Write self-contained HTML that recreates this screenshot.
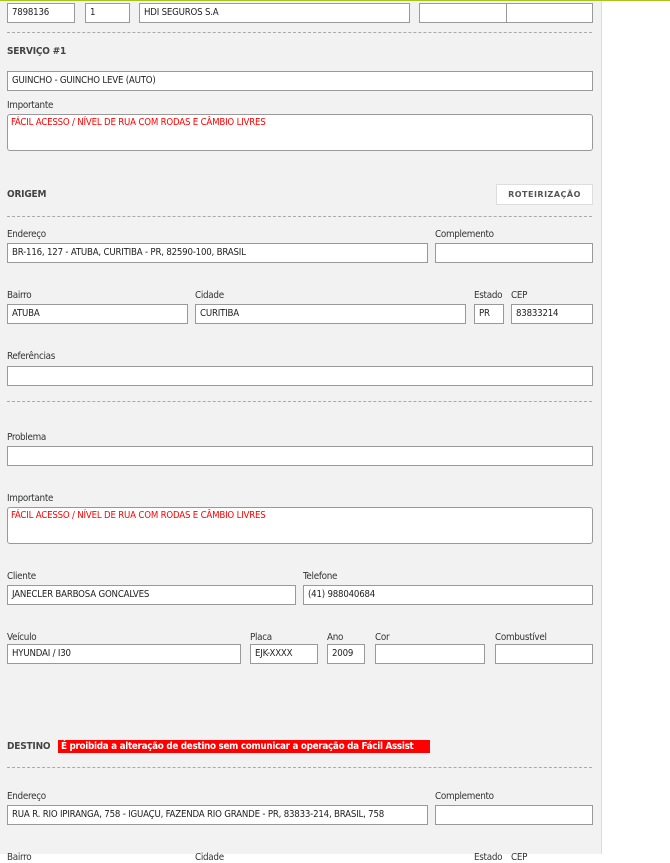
<!DOCTYPE html>
<html><head><meta charset="utf-8"><style>
*{margin:0;padding:0;box-sizing:border-box}
body{width:670px;height:854px;overflow:hidden;background:#fff;font-family:"DejaVu Sans Condensed","Liberation Sans",sans-serif;font-size:9px;color:#333;position:relative}
#panel{position:absolute;left:0;top:0;width:602px;height:854px;background:#f2f2f2;border-right:1px solid #dcdcdc}
#top{position:absolute;left:0;top:0;width:670px;height:1px;background:#a9c41c}
.i{position:absolute;height:20px;background:#fff;border:1px solid #999;padding:0 4px;line-height:18px;font-size:9.6px;color:#222;white-space:nowrap;overflow:hidden;letter-spacing:-0.2px}
.t{position:absolute;background:#fff;border:1px solid #999;border-radius:3px;padding:2px 3px;font-size:9.6px;color:#f00;letter-spacing:-0.2px}
.l{position:absolute;font-size:9.8px;color:#333;letter-spacing:-0.3px;margin-top:2px}
.h{position:absolute;font-size:10px;font-weight:bold;color:#444;font-family:"DejaVu Sans Condensed","Liberation Sans",sans-serif;letter-spacing:-0.2px;margin-top:0px}
.d{position:absolute;left:7px;width:585px;border-top:1px dashed #aaa}
</style></head><body>
<div id="panel"></div><div id="top"></div>
<div class="i" style="left:7px;top:3px;width:68px">7898136</div>
<div class="i" style="left:85px;top:3px;width:45px">1</div>
<div class="i" style="left:139px;top:3px;width:271px">HDI SEGUROS S.A</div>
<div class="i" style="left:419px;top:3px;width:88px"></div>
<div class="i" style="left:506px;top:3px;width:87px"></div>
<div class="d" style="top:32px"></div>
<div class="h" style="left:7px;top:46px">SERVIÇO #1</div>
<div class="i" style="left:7px;top:71px;width:586px">GUINCHO - GUINCHO LEVE (AUTO)</div>
<div class="l" style="left:7px;top:98px">Importante</div>
<div class="t" style="left:7px;top:114px;width:586px;height:37px">FÁCIL ACESSO / NÍVEL DE RUA COM RODAS E CÂMBIO LIVRES</div>
<div class="h" style="left:7px;top:189px">ORIGEM</div>
<div style="position:absolute;left:496px;top:184px;width:97px;height:21px;background:#fff;border:1px solid #ddd;font-size:8px;font-weight:bold;color:#555;text-align:center;line-height:19px;letter-spacing:0.5px;font-family:'DejaVu Sans',sans-serif">ROTEIRIZAÇÃO</div>
<div class="d" style="top:216px"></div>
<div class="l" style="left:7px;top:227px">Endereço</div>
<div class="l" style="left:435px;top:227px">Complemento</div>
<div class="i" style="left:7px;top:243px;width:421px">BR-116, 127 - ATUBA, CURITIBA - PR, 82590-100, BRASIL</div>
<div class="i" style="left:435px;top:243px;width:158px"></div>
<div class="l" style="left:7px;top:288px">Bairro</div>
<div class="l" style="left:195px;top:288px">Cidade</div>
<div class="l" style="left:474px;top:288px">Estado</div>
<div class="l" style="left:511px;top:288px">CEP</div>
<div class="i" style="left:7px;top:304px;width:181px">ATUBA</div>
<div class="i" style="left:195px;top:304px;width:271px">CURITIBA</div>
<div class="i" style="left:474px;top:304px;width:30px">PR</div>
<div class="i" style="left:511px;top:304px;width:82px">83833214</div>
<div class="l" style="left:7px;top:349px">Referências</div>
<div class="i" style="left:7px;top:366px;width:586px"></div>
<div class="d" style="top:401px"></div>
<div class="l" style="left:7px;top:430px">Problema</div>
<div class="i" style="left:7px;top:446px;width:586px"></div>
<div class="l" style="left:7px;top:491px">Importante</div>
<div class="t" style="left:7px;top:507px;width:586px;height:37px">FÁCIL ACESSO / NÍVEL DE RUA COM RODAS E CÂMBIO LIVRES</div>
<div class="l" style="left:7px;top:569px">Cliente</div>
<div class="l" style="left:303px;top:569px">Telefone</div>
<div class="i" style="left:7px;top:585px;width:289px">JANECLER BARBOSA GONCALVES</div>
<div class="i" style="left:303px;top:585px;width:290px">(41) 988040684</div>
<div class="l" style="left:7px;top:630px">Veículo</div>
<div class="l" style="left:250px;top:630px">Placa</div>
<div class="l" style="left:327px;top:630px">Ano</div>
<div class="l" style="left:375px;top:630px">Cor</div>
<div class="l" style="left:495px;top:630px">Combustível</div>
<div class="i" style="left:7px;top:644px;width:234px">HYUNDAI / I30</div>
<div class="i" style="left:250px;top:644px;width:68px">EJK-XXXX</div>
<div class="i" style="left:327px;top:644px;width:38px">2009</div>
<div class="i" style="left:375px;top:644px;width:110px"></div>
<div class="i" style="left:495px;top:644px;width:98px"></div>
<div class="h" style="left:7px;top:741px">DESTINO</div>
<div style="position:absolute;left:58px;top:740px;width:372px;height:13px;background:#f00;color:#fff;font-weight:bold;font-size:9.8px;line-height:13px;padding-left:3px;letter-spacing:-0.3px;white-space:nowrap;overflow:hidden;font-family:'DejaVu Sans Condensed',sans-serif">É proibida a alteração de destino sem comunicar a operação da Fácil Assist</div>
<div class="d" style="top:767px"></div>
<div class="l" style="left:7px;top:789px">Endereço</div>
<div class="l" style="left:435px;top:789px">Complemento</div>
<div class="i" style="left:7px;top:805px;width:421px">RUA R. RIO IPIRANGA, 758 - IGUAÇU, FAZENDA RIO GRANDE - PR, 83833-214, BRASIL, 758</div>
<div class="i" style="left:435px;top:805px;width:158px"></div>
<div class="l" style="left:7px;top:850px">Bairro</div>
<div class="l" style="left:195px;top:850px">Cidade</div>
<div class="l" style="left:474px;top:850px">Estado</div>
<div class="l" style="left:511px;top:850px">CEP</div>
</body></html>
